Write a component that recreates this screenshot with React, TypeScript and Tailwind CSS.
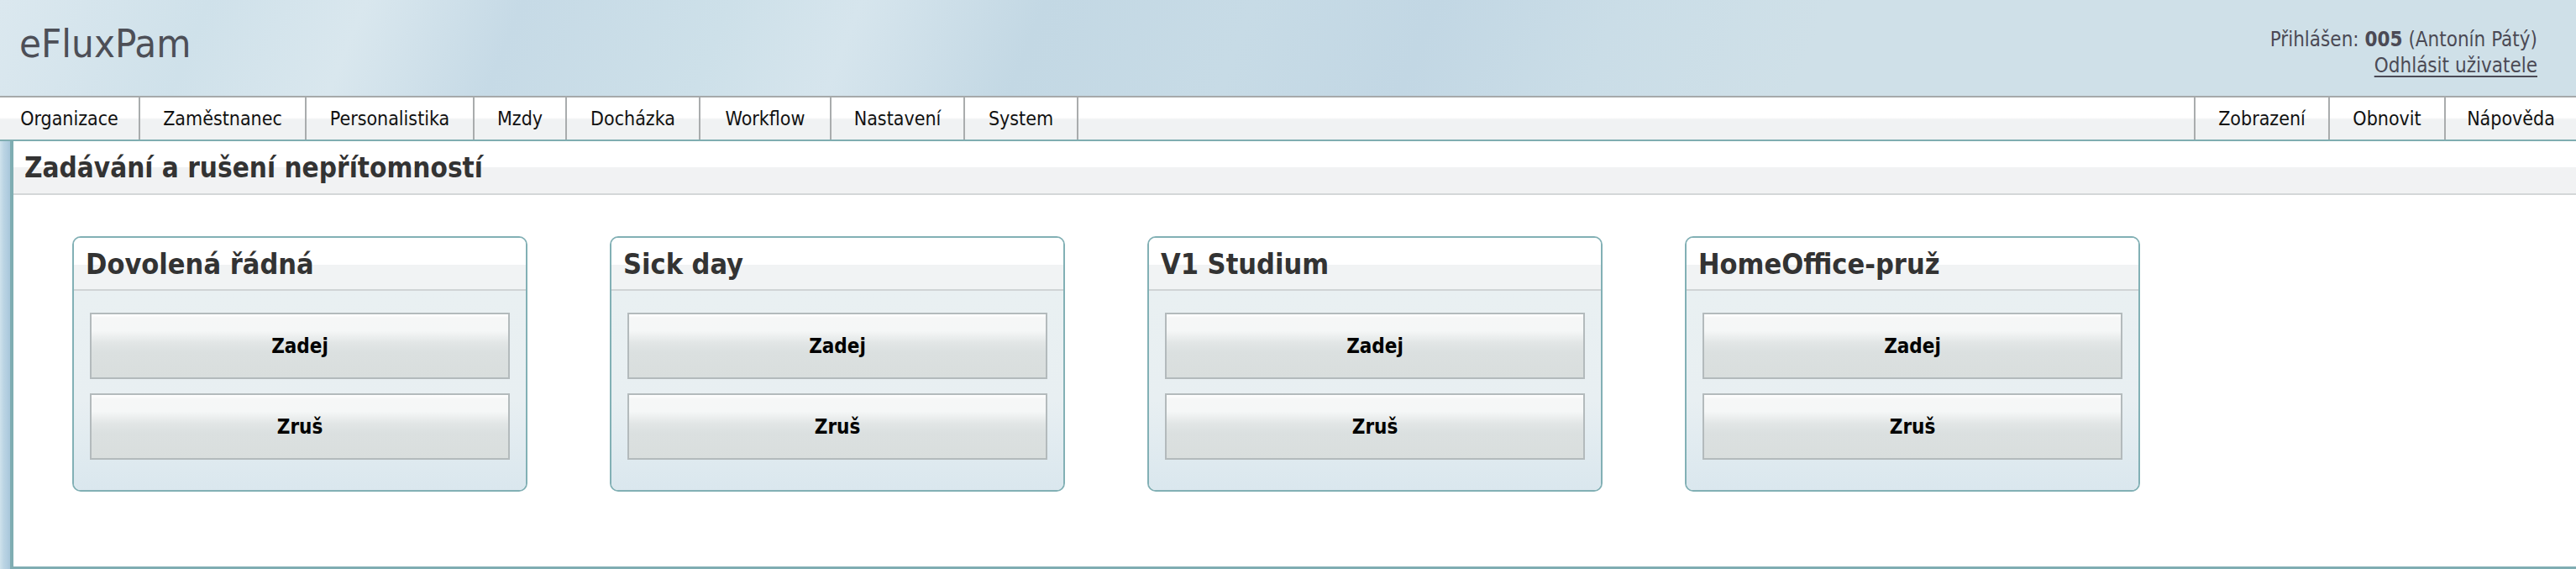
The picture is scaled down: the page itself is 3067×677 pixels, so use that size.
import React from "react";

const cond = "[font-family:'DejaVu_Sans_Condensed','DejaVu_Sans',sans-serif] [font-stretch:condensed]";

const leftItems: { label: string; w: string }[] = [
  { label: "Organizace", w: "w-[167px]" },
  { label: "Zaměstnanec", w: "w-[198px]" },
  { label: "Personalistika", w: "w-[200px]" },
  { label: "Mzdy", w: "w-[110px]" },
  { label: "Docházka", w: "w-[159px]" },
  { label: "Workflow", w: "w-[156px]" },
  { label: "Nastavení", w: "w-[159px]" },
  { label: "System", w: "w-[135px]" },
];

const rightItems: { label: string; w: string }[] = [
  { label: "Zobrazení", w: "w-[160px]" },
  { label: "Obnovit", w: "w-[138px]" },
  { label: "Nápověda", w: "w-[157px]" },
];

const cards = ["Dovolená řádná", "Sick day", "V1 Studium", "HomeOffice-pruž"];

function Btn({ label }: { label: string }) {
  return (
    <button
      className={`${cond} h-[79px] w-full border-2 border-[#b3babc] bg-[linear-gradient(to_bottom,#ffffff_0%,#f6f7f7_6%,#f5f7f7_26%,#e2e6e6_45%,#dbe0e0_60%,#d9dedd_100%)] text-[24px] font-bold text-black`}
    >
      {label}
    </button>
  );
}

function Card({ title }: { title: string }) {
  return (
    <div className="w-[542px] shrink-0 overflow-hidden rounded-[10px] border-2 border-[#82b0b5]">
      <div className="flex h-[63px] items-center border-b-2 border-[#d0d4d5] bg-[linear-gradient(to_bottom,#ffffff_0%,#ffffff_52%,#f1f3f4_52%,#f1f3f4_100%)] pl-[14px]">
        <span className={`${cond} text-[34px] font-bold leading-none text-[#333333]`}>{title}</span>
      </div>
      <div className="flex flex-col gap-[17px] bg-[linear-gradient(to_bottom,#e9f0f2_0%,#e8eff2_55%,#dae7ee_100%)] px-[19px] pb-[36px] pt-[26px]">
        <Btn label="Zadej" />
        <Btn label="Zruš" />
      </div>
    </div>
  );
}

export default function App() {
  return (
    <div className={`${cond} flex h-[677px] w-[3067px] flex-col overflow-hidden bg-white`}>
      {/* Header */}
      <div className="flex h-[114px] shrink-0 items-start justify-between bg-[linear-gradient(112deg,#dbe8ef_0%,#cfe1ea_8%,#d9e7ee_14%,#c6dae6_20%,#cde0e9_28%,#d6e5ed_33%,#c3d8e4_40%,#c7dbe6_48%,#c2d7e4_55%,#cadde7_62%,#cfe0e8_70%,#cfe0e8_100%)]">
        <div className="pl-[23px] pt-[25px] text-[47px] leading-[54px] text-[#4d4f57]">eFluxPam</div>
        <div className="pr-[46px] pt-[32px] text-right text-[24px] leading-[31px] text-[#4b4a55]">
          <div>
            Přihlášen: <span className="font-bold">005</span> (Antonín Pátý)
          </div>
          <div>
            <span className="underline decoration-[2px] underline-offset-[4px]">Odhlásit uživatele</span>
          </div>
        </div>
      </div>

      {/* Nav */}
      <div className="flex h-[54px] shrink-0 border-b-2 border-t-2 border-b-[#80adb1] border-t-[#a6a9aa] bg-[linear-gradient(to_bottom,#ffffff_0%,#ffffff_48%,#f0f2f3_52%,#f0f2f3_100%)]">
        {leftItems.map((it) => (
          <div
            key={it.label}
            className={`${it.w} flex shrink-0 items-center justify-center border-r-2 border-[#a9acad] text-[23px] text-[#111111]`}
          >
            {it.label}
          </div>
        ))}
        <div className="flex-1" />
        {rightItems.map((it) => (
          <div
            key={it.label}
            className={`${it.w} flex shrink-0 items-center justify-center border-l-2 border-[#a9acad] text-[23px] text-[#111111]`}
          >
            {it.label}
          </div>
        ))}
      </div>

      {/* Body */}
      <div className="flex min-h-0 flex-1">
        <div className="w-[12px] shrink-0 bg-[linear-gradient(to_right,#cfe2ec_0%,#bcd5e4_35%,#aecbde_80%,#a7c6da_100%)]" />
        <div className="flex min-w-0 flex-1 flex-col border-b-[3px] border-l-4 border-[#7fadb2]">
          <div className="flex h-[64px] shrink-0 items-center border-b-2 border-[#d4d7d8] bg-[linear-gradient(to_bottom,#ffffff_0%,#ffffff_50%,#f1f2f3_50%,#f1f2f3_100%)] pl-[13px]">
            <h1 className={`${cond} text-[33px] font-bold leading-none text-[#333333]`}>
              Zadávání a rušení nepřítomností
            </h1>
          </div>
          <div className="flex flex-1 items-start gap-[98px] pl-[70px] pt-[49px]">
            {cards.map((c) => (
              <Card key={c} title={c} />
            ))}
          </div>
        </div>
      </div>
    </div>
  );
}
